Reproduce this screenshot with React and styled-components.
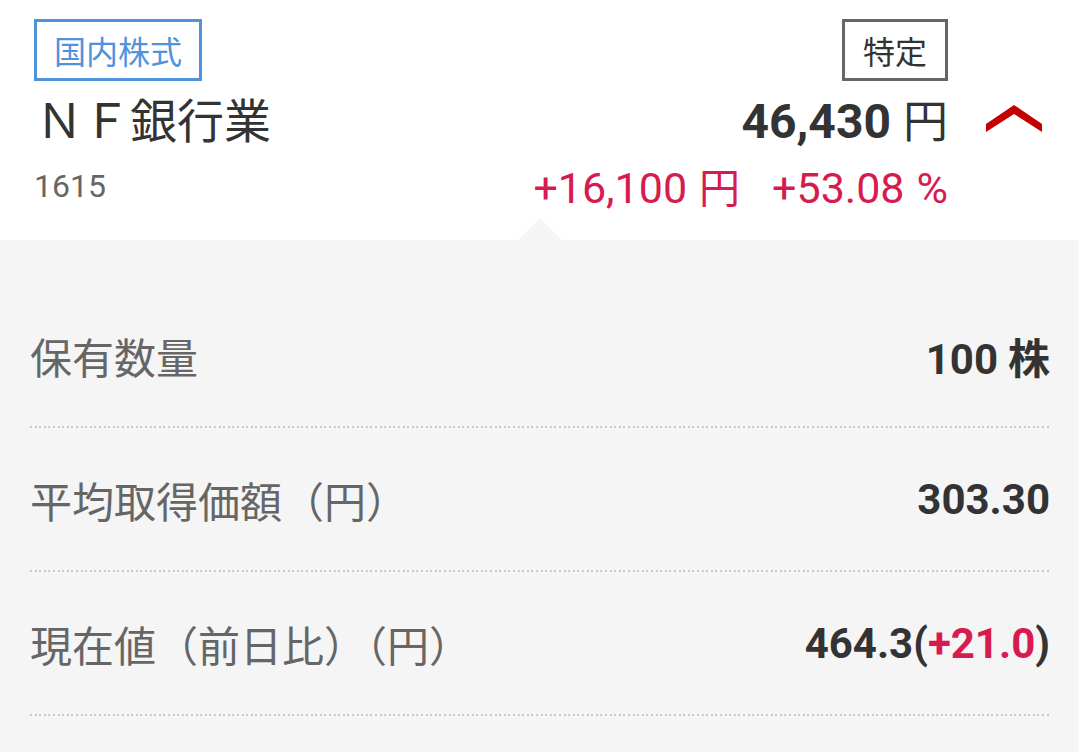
import React from "react";
import styled, { createGlobalStyle } from "styled-components";

const Global = createGlobalStyle`
  html, body { margin: 0; padding: 0; background: #f5f5f5; }
  body { font-family: Roboto, "Noto Sans CJK JP", sans-serif; }
`;

const Page = styled.div`
  width: 1079px;
  min-height: 752px;
  background: #f5f5f5;
  overflow: hidden;
`;

const Header = styled.header`
  position: relative;
  background: #fff;
  height: 240px;
  box-sizing: border-box;
  padding: 19px 0 0 34px;
  display: flex;
  align-items: flex-start;
`;

const Notch = styled.div`
  position: absolute;
  left: 518px;
  bottom: 0;
  width: 0;
  height: 0;
  border-left: 22px solid transparent;
  border-right: 22px solid transparent;
  border-bottom: 22px solid #f5f5f5;
`;

const LeftCol = styled.div`
  flex: 1;
  display: flex;
  flex-direction: column;
  align-items: flex-start;
`;

const RightCol = styled.div`
  display: flex;
  flex-direction: column;
  align-items: flex-end;
`;

const Tag = styled.span`
  display: inline-flex;
  align-items: center;
  justify-content: center;
  box-sizing: border-box;
  height: 62px;
  padding: 0 ${(p) => p.$pad}px;
  border: ${(p) => p.$bw}px solid ${(p) => p.$color};
  color: ${(p) => p.$text};
  font-size: 32px;
  font-family: "Noto Sans CJK JP", sans-serif;
  line-height: 1;
  background: #fff;
`;

const Title = styled.div`
  margin-top: 12px;
  margin-left: 2px;
  font-family: "Noto Sans CJK JP", sans-serif;
  font-size: 47px;
  line-height: 50px;
  color: #333;
`;

const Code = styled.div`
  margin-top: 23px;
  font-size: 32px;
  line-height: 40px;
  color: #666;
`;

const Price = styled.div`
  margin-top: 13px;
  display: flex;
  align-items: baseline;
  gap: 12px;
  color: #333;
  line-height: 50px;
`;

const PriceNum = styled.span`
  font-size: 48px;
  font-weight: 700;
`;

const Unit = styled.span`
  font-family: "Noto Sans CJK JP", sans-serif;
  font-size: ${(p) => p.$size}px;
  font-weight: 400;
`;

const Change = styled.div`
  margin-top: 16px;
  display: flex;
  align-items: baseline;
  gap: 32px;
  color: #d81b4f;
  font-size: 43px;
  line-height: 44px;
`;

const ChangeItem = styled.span`
  display: inline-flex;
  align-items: baseline;
  gap: 12px;
`;

const ChevronCol = styled.div`
  width: 131px;
  display: flex;
  justify-content: center;
  padding-top: 86px;
`;

const List = styled.div`
  padding: 44px 29px 0 30px;
`;

const Row = styled.div`
  height: 144px;
  box-sizing: border-box;
  display: flex;
  align-items: center;
  justify-content: space-between;
  padding-bottom: 2px;
  background-image: repeating-linear-gradient(
    to right,
    #c8c8c8 0 2px,
    transparent 2px 4.6px
  );
  background-size: 100% 2px;
  background-position: left bottom;
  background-repeat: no-repeat;
`;

const Label = styled.span`
  font-family: "Noto Sans CJK JP", sans-serif;
  font-size: 42px;
  color: #666;
`;

const Value = styled.span`
  font-size: 42px;
  font-weight: 700;
  color: #333;
  display: inline-flex;
  align-items: baseline;
  gap: ${(p) => p.$gap || 0}px;
`;

const Plus = styled.span`
  color: #d81b4f;
`;

const BoldUnit = styled.span`
  font-family: "Noto Sans CJK JP", sans-serif;
  font-weight: 700;
`;

const rows = [
  { label: "保有数量", value: (<><span>100</span><BoldUnit>株</BoldUnit></>), gap: 10 },
  { label: "平均取得価額（円）", value: "303.30" },
  {
    label: "現在値（前日比）（円）",
    value: (<span>464.3(<Plus>+21.0</Plus>)</span>),
  },
];

export default function App() {
  return (
    <Page>
      <Global />
      <Header>
        <LeftCol>
          <Tag $color="#4f93dd" $text="#4f93dd" $bw={3} $pad={17}>国内株式</Tag>
          <Title>ＮＦ銀行業</Title>
          <Code>1615</Code>
        </LeftCol>
        <RightCol>
          <Tag $color="#666" $text="#333" $bw={3} $pad={18}>特定</Tag>
          <Price>
            <PriceNum>46,430</PriceNum>
            <Unit $size={45}>円</Unit>
          </Price>
          <Change>
            <ChangeItem>
              <span>+16,100</span>
              <Unit $size={41}>円</Unit>
            </ChangeItem>
            <ChangeItem>
              <span>+53.08</span>
              <span>%</span>
            </ChangeItem>
          </Change>
        </RightCol>
        <ChevronCol>
          <svg width="56" height="28" viewBox="0 0 56 28">
            <polygon points="0,19 28,0 56,19 56,27 28,9 0,27" fill="#c40000" />
          </svg>
        </ChevronCol>
        <Notch />
      </Header>
      <List>
        {rows.map((r) => (
          <Row key={r.label}>
            <Label>{r.label}</Label>
            <Value $gap={r.gap}>{r.value}</Value>
          </Row>
        ))}
      </List>
    </Page>
  );
}
